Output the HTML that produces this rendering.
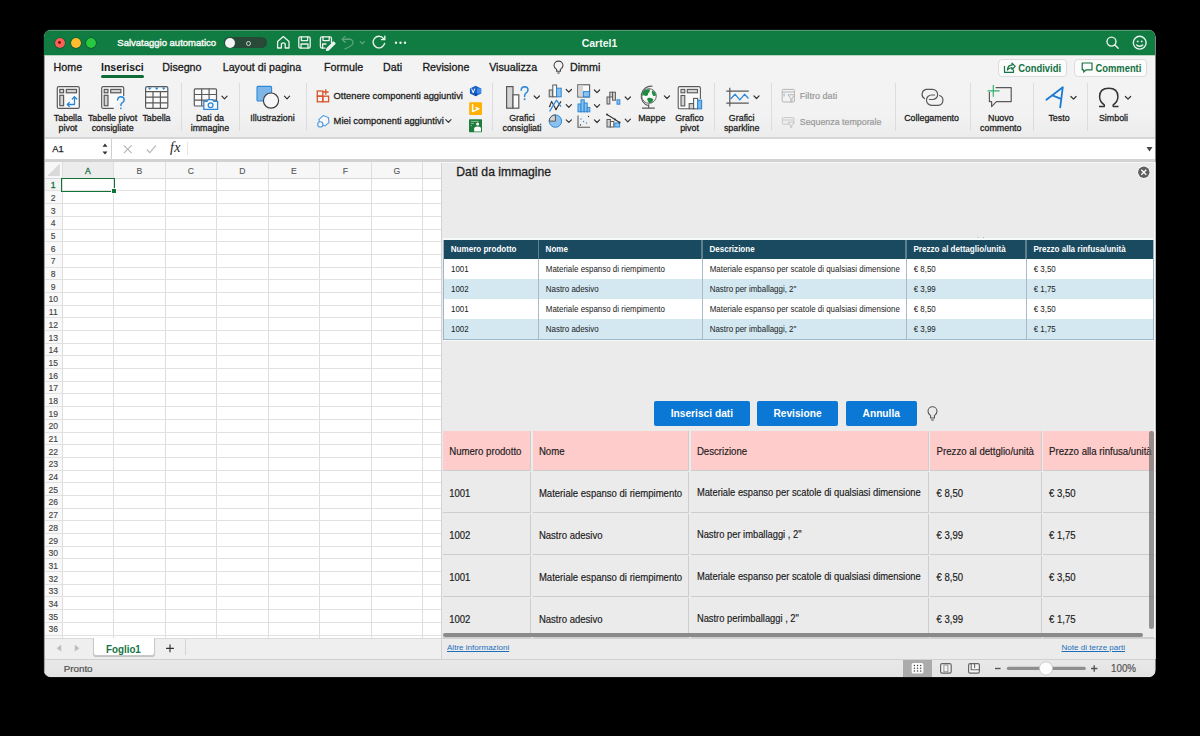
<!DOCTYPE html><html><head><meta charset="utf-8"><style>
html,body{margin:0;padding:0;background:#000;width:1200px;height:736px;overflow:hidden;font-family:"Liberation Sans", sans-serif;}
#win{position:absolute;left:0;top:0;width:1200px;height:736px;clip-path:inset(30px 44.5px 58.9px 44px round 7px);background:#f3f3f3;}
svg{position:absolute;overflow:visible}
</style></head><body>
<div style="position:absolute;left:43px;top:29px;width:1113px;height:649px;border-radius:8px;background:#121212;"></div>
<div id="win">

<div style="position:absolute;left:44px;top:30px;width:1111px;height:25px;background:#107c41"></div>
<div style="position:absolute;left:44px;top:30px;width:1111px;height:1px;background:#4f9a70"></div>
<div style="position:absolute;left:44px;top:54.5px;width:1111px;height:1px;background:#b9d4c4"></div>
<div style="position:absolute;left:54.5px;top:37.5px;width:10px;height:10px;border-radius:50%;background:#fe5f57;box-shadow:0 0 0 0.6px rgba(0,40,20,0.55)"></div>
<div style="position:absolute;left:70.5px;top:37.5px;width:10px;height:10px;border-radius:50%;background:#febc2e;box-shadow:0 0 0 0.6px rgba(0,40,20,0.55)"></div>
<div style="position:absolute;left:86.3px;top:37.5px;width:10px;height:10px;border-radius:50%;background:#28c840;box-shadow:0 0 0 0.6px rgba(0,40,20,0.55)"></div>
<div style="position:absolute;left:58.1px;top:41.1px;width:2.8px;height:2.8px;border-radius:50%;background:#7a1510"></div>
<div style="position:absolute;left:117.3px;top:38.16px;font-size:9.5px;color:#f0f6f2;font-weight:normal;white-space:nowrap;line-height:1;-webkit-text-stroke:0.45px #f0f6f2">Salvataggio automatico</div>
<div style="position:absolute;left:224px;top:37.2px;width:43px;height:11px;border-radius:6px;background:#284838"></div>
<div style="position:absolute;left:224.5px;top:37.5px;width:10px;height:10px;border-radius:50%;background:#f4f4f4"></div>
<div style="position:absolute;left:246px;top:40.5px;width:5px;height:5px;border-radius:50%;box-sizing:border-box;border:1px solid #cfd8d2"></div>
<div style="position:absolute;left:449.5px;width:300px;text-align:center;top:37.71px;font-size:10.5px;color:#f4f8f5;font-weight:bold;white-space:nowrap;line-height:1;">Cartel1</div>
<svg style="left:0;top:0" width="1200" height="60">
<g fill="none" stroke="#eaf3ee" stroke-width="1.3" stroke-linejoin="round" stroke-linecap="round">
<path d="M277.6 48 V41.5 L283.3 36.6 L289 41.5 V48 H285.2 V43.8 Q283.3 42 281.4 43.8 V48 Z"/>
<rect x="298.8" y="36.8" width="11.4" height="11.4" rx="1.6"/>
<path d="M301.4 37 V40.6 H307.6 V37"/><path d="M301 48 V44 H308 V48"/>
<path d="M331.5 43 V38.4 Q331.5 36.8 329.9 36.8 H322 Q320.4 36.8 320.4 38.4 V46.6 Q320.4 48.2 322 48.2 H325"/>
<path d="M323 37 V40.6 H329.2 V37"/><path d="M322.6 48 V44 H326"/>
<path d="M327 48.5 L333.5 42 L335 43.5 L328.5 50 L326.6 50.3 Z" fill="#eaf3ee"/>
</g>
<g fill="none" stroke="#5fa37f" stroke-width="1.3" stroke-linecap="round" stroke-linejoin="round">
<path d="M342.4 39.4 L348 39 Q353.2 39.2 353 43 Q352.6 46 345 48.8"/><path d="M345 36.4 L342.2 39.4 L345.2 42.2"/>
<path d="M360.3 41.8 L362.3 43.8 L364.3 41.8"/>
</g>
<g fill="none" stroke="#eaf3ee" stroke-width="1.4" stroke-linecap="round">
<path d="M383.6 38.6 A5.8 5.8 0 1 0 384.6 43.4"/><path d="M384.8 36.2 V39.6 H381.4"/>
</g>
<g fill="#eaf3ee"><circle cx="396" cy="42.8" r="1.2"/><circle cx="400.5" cy="42.8" r="1.2"/><circle cx="405" cy="42.8" r="1.2"/></g>
<g fill="none" stroke="#eaf3ee" stroke-width="1.4" stroke-linecap="round">
<circle cx="1111.5" cy="41.6" r="4.5"/><path d="M1114.7 44.8 L1118.2 48.3"/>
<circle cx="1139.7" cy="42.7" r="6.4"/><path d="M1136.7 45 Q1139.7 47.6 1142.7 45"/>
</g>
<g fill="#eaf3ee"><circle cx="1137.7" cy="41.4" r="0.95"/><circle cx="1141.7" cy="41.4" r="0.95"/></g>
</svg>
<div style="position:absolute;left:53.6px;top:61.94px;font-size:10.7px;color:#1a1a1a;font-weight:normal;white-space:nowrap;line-height:1;-webkit-text-stroke:0.3px #1a1a1a">Home</div>
<div style="position:absolute;left:101px;top:62.07px;font-size:10.55px;color:#1a1a1a;font-weight:bold;white-space:nowrap;line-height:1;">Inserisci</div>
<div style="position:absolute;left:162.3px;top:61.94px;font-size:10.7px;color:#1a1a1a;font-weight:normal;white-space:nowrap;line-height:1;-webkit-text-stroke:0.3px #1a1a1a">Disegno</div>
<div style="position:absolute;left:222.7px;top:61.94px;font-size:10.7px;color:#1a1a1a;font-weight:normal;white-space:nowrap;line-height:1;-webkit-text-stroke:0.3px #1a1a1a">Layout di pagina</div>
<div style="position:absolute;left:324px;top:61.94px;font-size:10.7px;color:#1a1a1a;font-weight:normal;white-space:nowrap;line-height:1;-webkit-text-stroke:0.3px #1a1a1a">Formule</div>
<div style="position:absolute;left:383px;top:61.94px;font-size:10.7px;color:#1a1a1a;font-weight:normal;white-space:nowrap;line-height:1;-webkit-text-stroke:0.3px #1a1a1a">Dati</div>
<div style="position:absolute;left:422.4px;top:61.94px;font-size:10.7px;color:#1a1a1a;font-weight:normal;white-space:nowrap;line-height:1;-webkit-text-stroke:0.3px #1a1a1a">Revisione</div>
<div style="position:absolute;left:489.2px;top:61.94px;font-size:10.7px;color:#1a1a1a;font-weight:normal;white-space:nowrap;line-height:1;-webkit-text-stroke:0.3px #1a1a1a">Visualizza</div>
<div style="position:absolute;left:570px;top:61.94px;font-size:10.7px;color:#1a1a1a;font-weight:normal;white-space:nowrap;line-height:1;-webkit-text-stroke:0.3px #1a1a1a">Dimmi</div>
<div style="position:absolute;left:101px;top:75px;width:43px;height:2.6px;border-radius:2px;background:#0f6b36"></div>
<svg style="left:0;top:0" width="1200" height="80"><g fill="none" stroke="#444" stroke-width="1.1">
<path d="M556.6 71.2 V69.4 Q554 67.8 554 65.6 A4.5 4.5 0 0 1 563 65.6 Q563 67.8 560.4 69.4 V71.2 Z"/><path d="M557.2 73 H559.8"/></g></svg>
<div style="position:absolute;left:997.5px;top:58.8px;width:69px;height:18.4px;box-sizing:border-box;border:1px solid #dcdcdc;border-radius:4px;background:#fbfbfb"></div>
<div style="position:absolute;left:1074.3px;top:58.8px;width:73.2px;height:18.4px;box-sizing:border-box;border:1px solid #dcdcdc;border-radius:4px;background:#fbfbfb"></div>
<div style="position:absolute;left:1018.3px;top:64.24px;font-size:9.4px;color:#127240;font-weight:bold;white-space:nowrap;line-height:1;transform:scaleY(1.1);transform-origin:0 84.65%">Condividi</div>
<div style="position:absolute;left:1095.5px;top:64.24px;font-size:9.4px;color:#127240;font-weight:bold;white-space:nowrap;line-height:1;transform:scaleY(1.1);transform-origin:0 84.65%">Commenti</div>
<svg style="left:0;top:0" width="1200" height="80"><g fill="none" stroke="#167443" stroke-width="1.2" stroke-linejoin="round">
<path d="M1004.5 66 V72.3 H1013.5 V69.5"/><path d="M1007.4 70 Q1007.8 65.2 1012 65.2 V63.2 L1015.2 66.4 L1012 69.6 V67.6 Q1009.2 67.6 1007.4 70 Z"/>
<path d="M1082.2 63 H1092 V69.8 H1086 L1083.7 72.2 V69.8 H1082.2 Z"/>
</g></svg>
<div style="position:absolute;left:44px;top:80px;width:1111px;height:57px;background:linear-gradient(#f3f3f3 0%,#f2f2f2 60%,#ececec 100%)"></div>
<div style="position:absolute;left:44px;top:137px;width:1111px;height:1.5px;background:#d7d7d7"></div>
<div style="position:absolute;left:181px;top:82.7px;width:1px;height:48.5px;background:#dcdcdc"></div>
<div style="position:absolute;left:239px;top:82.7px;width:1px;height:48.5px;background:#dcdcdc"></div>
<div style="position:absolute;left:305.8px;top:82.7px;width:1px;height:48.5px;background:#dcdcdc"></div>
<div style="position:absolute;left:492px;top:82.7px;width:1px;height:48.5px;background:#dcdcdc"></div>
<div style="position:absolute;left:714.2px;top:82.7px;width:1px;height:48.5px;background:#dcdcdc"></div>
<div style="position:absolute;left:770.7px;top:82.7px;width:1px;height:48.5px;background:#dcdcdc"></div>
<div style="position:absolute;left:894.5px;top:82.7px;width:1px;height:48.5px;background:#dcdcdc"></div>
<div style="position:absolute;left:970px;top:82.7px;width:1px;height:48.5px;background:#dcdcdc"></div>
<div style="position:absolute;left:1033px;top:82.7px;width:1px;height:48.5px;background:#dcdcdc"></div>
<div style="position:absolute;left:1087px;top:82.7px;width:1px;height:48.5px;background:#dcdcdc"></div>
<div style="position:absolute;left:44px;top:138.5px;width:1111px;height:20.8px;background:#ffffff"></div>
<div style="position:absolute;left:111px;top:138.5px;width:1.2px;height:20.8px;background:#cfcfcf"></div>
<div style="position:absolute;left:187px;top:142px;width:1px;height:13px;background:#e6e6e6"></div>
<div style="position:absolute;left:44px;top:159.3px;width:1111px;height:2.5px;background:#d2d2d2"></div>
<div style="position:absolute;left:52.3px;top:145.13px;font-size:9.3px;color:#222;font-weight:normal;white-space:nowrap;line-height:1;-webkit-text-stroke:0.25px #222">A1</div>
<div style="position:absolute;left:-82.1px;width:300px;text-align:center;top:114.37px;font-size:8.9px;color:#1e1e1e;font-weight:normal;white-space:nowrap;line-height:1;-webkit-text-stroke:0.28px #1e1e1e">Tabella</div>
<div style="position:absolute;left:-82.1px;width:300px;text-align:center;top:123.57px;font-size:8.9px;color:#1e1e1e;font-weight:normal;white-space:nowrap;line-height:1;-webkit-text-stroke:0.28px #1e1e1e">pivot</div>
<div style="position:absolute;left:-37.400000000000006px;width:300px;text-align:center;top:114.37px;font-size:8.9px;color:#1e1e1e;font-weight:normal;white-space:nowrap;line-height:1;-webkit-text-stroke:0.28px #1e1e1e">Tabelle pivot</div>
<div style="position:absolute;left:-37.400000000000006px;width:300px;text-align:center;top:123.57px;font-size:8.9px;color:#1e1e1e;font-weight:normal;white-space:nowrap;line-height:1;-webkit-text-stroke:0.28px #1e1e1e">consigliate</div>
<div style="position:absolute;left:6.5px;width:300px;text-align:center;top:114.37px;font-size:8.9px;color:#1e1e1e;font-weight:normal;white-space:nowrap;line-height:1;-webkit-text-stroke:0.28px #1e1e1e">Tabella</div>
<div style="position:absolute;left:60px;width:300px;text-align:center;top:114.37px;font-size:8.9px;color:#1e1e1e;font-weight:normal;white-space:nowrap;line-height:1;-webkit-text-stroke:0.28px #1e1e1e">Dati da</div>
<div style="position:absolute;left:60px;width:300px;text-align:center;top:123.57px;font-size:8.9px;color:#1e1e1e;font-weight:normal;white-space:nowrap;line-height:1;-webkit-text-stroke:0.28px #1e1e1e">immagine</div>
<div style="position:absolute;left:122.5px;width:300px;text-align:center;top:114.37px;font-size:8.9px;color:#1e1e1e;font-weight:normal;white-space:nowrap;line-height:1;-webkit-text-stroke:0.28px #1e1e1e">Illustrazioni</div>
<div style="position:absolute;left:372px;width:300px;text-align:center;top:114.37px;font-size:8.9px;color:#1e1e1e;font-weight:normal;white-space:nowrap;line-height:1;-webkit-text-stroke:0.28px #1e1e1e">Grafici</div>
<div style="position:absolute;left:372px;width:300px;text-align:center;top:123.57px;font-size:8.9px;color:#1e1e1e;font-weight:normal;white-space:nowrap;line-height:1;-webkit-text-stroke:0.28px #1e1e1e">consigliati</div>
<div style="position:absolute;left:501.79999999999995px;width:300px;text-align:center;top:114.37px;font-size:8.9px;color:#1e1e1e;font-weight:normal;white-space:nowrap;line-height:1;-webkit-text-stroke:0.28px #1e1e1e">Mappe</div>
<div style="position:absolute;left:539.5px;width:300px;text-align:center;top:114.37px;font-size:8.9px;color:#1e1e1e;font-weight:normal;white-space:nowrap;line-height:1;-webkit-text-stroke:0.28px #1e1e1e">Grafico</div>
<div style="position:absolute;left:539.5px;width:300px;text-align:center;top:123.57px;font-size:8.9px;color:#1e1e1e;font-weight:normal;white-space:nowrap;line-height:1;-webkit-text-stroke:0.28px #1e1e1e">pivot</div>
<div style="position:absolute;left:591.7px;width:300px;text-align:center;top:114.37px;font-size:8.9px;color:#1e1e1e;font-weight:normal;white-space:nowrap;line-height:1;-webkit-text-stroke:0.28px #1e1e1e">Grafici</div>
<div style="position:absolute;left:591.7px;width:300px;text-align:center;top:123.57px;font-size:8.9px;color:#1e1e1e;font-weight:normal;white-space:nowrap;line-height:1;-webkit-text-stroke:0.28px #1e1e1e">sparkline</div>
<div style="position:absolute;left:781.6px;width:300px;text-align:center;top:114.37px;font-size:8.9px;color:#1e1e1e;font-weight:normal;white-space:nowrap;line-height:1;-webkit-text-stroke:0.28px #1e1e1e">Collegamento</div>
<div style="position:absolute;left:850.8px;width:300px;text-align:center;top:114.37px;font-size:8.9px;color:#1e1e1e;font-weight:normal;white-space:nowrap;line-height:1;-webkit-text-stroke:0.28px #1e1e1e">Nuovo</div>
<div style="position:absolute;left:850.8px;width:300px;text-align:center;top:123.57px;font-size:8.9px;color:#1e1e1e;font-weight:normal;white-space:nowrap;line-height:1;-webkit-text-stroke:0.28px #1e1e1e">commento</div>
<div style="position:absolute;left:909px;width:300px;text-align:center;top:114.37px;font-size:8.9px;color:#1e1e1e;font-weight:normal;white-space:nowrap;line-height:1;-webkit-text-stroke:0.28px #1e1e1e">Testo</div>
<div style="position:absolute;left:963.5px;width:300px;text-align:center;top:114.37px;font-size:8.9px;color:#1e1e1e;font-weight:normal;white-space:nowrap;line-height:1;-webkit-text-stroke:0.28px #1e1e1e">Simboli</div>
<div style="position:absolute;left:333.6px;top:91.69px;font-size:9.35px;color:#1e1e1e;font-weight:normal;white-space:nowrap;line-height:1;-webkit-text-stroke:0.28px #1e1e1e">Ottenere componenti aggiuntivi</div>
<div style="position:absolute;left:333.6px;top:116.69px;font-size:9.35px;color:#1e1e1e;font-weight:normal;white-space:nowrap;line-height:1;-webkit-text-stroke:0.28px #1e1e1e">Miei componenti aggiuntivi</div>
<div style="position:absolute;left:799.8px;top:91.7px;font-size:9.1px;color:#999;font-weight:normal;white-space:nowrap;line-height:1;-webkit-text-stroke:0.2px #999">Filtro dati</div>
<div style="position:absolute;left:799.8px;top:117.51px;font-size:8.85px;color:#999;font-weight:normal;white-space:nowrap;line-height:1;-webkit-text-stroke:0.2px #999">Sequenza temporale</div>
<svg style="left:0;top:0" width="1200" height="140">
<defs><path id="chev" d="M-2.6 -1.3 L0 1.3 L2.6 -1.3" fill="none" stroke="#333" stroke-width="1.2" stroke-linecap="round" stroke-linejoin="round"/></defs>
<!-- tabella pivot -->
<g stroke="#595959" stroke-width="1.2" fill="none">
<rect x="57.3" y="86.6" width="22" height="21.8" rx="1.5" fill="#fafafa"/>
<rect x="59.8" y="89.4" width="3.8" height="3.4" fill="#d4d4d4"/><rect x="66.3" y="89.4" width="10.2" height="3.4" fill="#d4d4d4"/>
<rect x="59.8" y="95.3" width="3.8" height="10.4" fill="#d4d4d4"/>
</g>
<g stroke="#2b88d8" stroke-width="1.3" fill="none" stroke-linecap="round" stroke-linejoin="round">
<path d="M67.5 104.5 H74.5 V97"/><path d="M72.3 99 L74.5 96.7 L76.7 99"/><path d="M69.3 102.5 L67.3 104.5 L69.3 106.5"/>
</g>
<!-- tabelle pivot consigliate -->
<g stroke="#595959" stroke-width="1.2" fill="none">
<path d="M113.8 108.4 H103.2 Q101.7 108.4 101.7 106.9 V88.1 Q101.7 86.6 103.2 86.6 H122.2 Q123.7 86.6 123.7 88.1 V96" fill="#fafafa"/>
<rect x="104.2" y="89.4" width="3.8" height="3.4" fill="#d4d4d4"/><rect x="110.7" y="89.4" width="10.2" height="3.4" fill="#d4d4d4"/>
<rect x="104.2" y="95.3" width="3.8" height="10.4" fill="#d4d4d4"/>
</g>
<g stroke="#2b88d8" stroke-width="1.5" fill="none" stroke-linecap="round">
<path d="M117.6 100 Q117.8 96.7 121 96.7 Q124.2 96.8 124.2 99.8 Q124.2 102 121.8 103.2 Q120.9 103.8 120.9 105.6"/>
</g>
<circle cx="120.9" cy="108.3" r="0.9" fill="#2b88d8"/>
<!-- tabella -->
<g stroke="#595959" stroke-width="1.2" fill="#fafafa">
<rect x="145.6" y="86.6" width="22.2" height="21.8" rx="1.5"/>
<path d="M145.6 91.6 H167.8 M145.6 97.2 H167.8 M145.6 102.8 H167.8 M153 91.6 V108.4 M160.4 91.6 V108.4" fill="none"/>
</g>
<g fill="#2b88d8"><path d="M147.7 87.6 H151.7 L149.7 90 Z"/><path d="M154.7 87.6 H158.7 L156.7 90 Z"/><path d="M161.7 87.6 H165.7 L163.7 90 Z"/></g>
<!-- dati da immagine -->
<g stroke="#595959" stroke-width="1.2" fill="#fafafa">
<rect x="194.3" y="88.8" width="22.2" height="17.2" rx="1"/>
<path d="M194.3 94.5 H216.5 M194.3 100.2 H216.5 M201.7 88.8 V106 M209.1 88.8 V106" fill="none"/>
</g>
<g stroke="#2b88d8" stroke-width="1.3" fill="#fafafa" stroke-linejoin="round">
<path d="M203.8 101.3 H207 L208.3 99.6 H212.5 L213.8 101.3 H217.6 V109.4 H203.8 Z"/>
<circle cx="210.6" cy="105.2" r="2.4"/>
</g>
<use href="#chev" x="224.5" y="97.5"/>
<!-- illustrazioni -->
<rect x="257" y="86.4" width="14.6" height="14.6" rx="1" fill="#7db6e8" stroke="#2b88d8" stroke-width="1.1"/>
<circle cx="271" cy="100.6" r="7.6" fill="#f7f7f7" stroke="#404040" stroke-width="1.2"/>
<use href="#chev" x="287" y="97.5"/>
<!-- ottenere componenti -->
<g stroke="#d9542c" stroke-width="1.3" fill="none">
<rect x="317.3" y="91" width="5.5" height="5.2"/><rect x="317.3" y="96.2" width="5.5" height="5.6"/><rect x="322.8" y="96.2" width="5.8" height="5.6"/>
<path d="M325.8 89.2 V94.8 M323 92 H328.6"/>
</g>
<!-- miei componenti -->
<g stroke="#4a9be0" stroke-width="1.1" fill="#f7f7f7">
<path d="M323.2 115.6 L328.4 117.6 L329 122.6 L325 126 L319.8 124.4 L319 119.4 Z"/>
<circle cx="320.3" cy="124.4" r="2.6"/>
</g>
<use href="#chev" x="448.4" y="121"/>
<!-- side icons -->
<path d="M475.6 85.8 L481.2 88.4 V93.4 L475.6 96.2 L469.9 93.4 V88.4 Z" fill="#1b5fc4"/>
<rect x="477" y="88.4" width="4.2" height="5" fill="#3f8ef0"/>
<path d="M471.6 88.6 L473.2 92.8 L474.8 88.6" stroke="#fff" stroke-width="1" fill="none"/>
<path d="M474.5 92.8 L477.3 94.4 L475.6 96.2 Z" fill="#0c3f8f"/>
<rect x="469.2" y="102.2" width="12.8" height="12.8" rx="0.8" fill="#ffb000"/>
<path d="M472.6 104.2 V111.6 L478.8 108.8 L475.4 107.4" stroke="#fff" stroke-width="1.5" fill="none" stroke-linejoin="round"/>
<rect x="469" y="119.2" width="13" height="13" rx="0.8" fill="#1f7d3c"/>
<path d="M470.8 121.4 H478.6 M470.8 123.4 H474 M470.8 125.6 H472" stroke="#cfe6d5" stroke-width="0.6"/>
<circle cx="477.6" cy="124" r="1.5" fill="#fff"/>
<path d="M474.2 131.6 V128.6 Q474.2 126.4 477.6 126.4 Q481 126.4 481 128.6 V131.6 Z" fill="#fff"/>
<!-- grafici consigliati -->
<g stroke="#595959" stroke-width="1.2" fill="#d4d4d4">
<rect x="506.6" y="86.6" width="6.4" height="21.6"/><rect x="513" y="94.8" width="5.8" height="13.4" fill="#fafafa"/>
</g>
<path d="M521.2 90.2 Q521.4 86.8 524.6 86.8 Q528 86.9 528 90 Q528 92.2 525.5 93.6 Q524.6 94.2 524.6 96.5" stroke="#2b88d8" stroke-width="1.5" fill="none" stroke-linecap="round"/>
<circle cx="524.6" cy="99.3" r="0.95" fill="#2b88d8"/>
<use href="#chev" x="536.8" y="97.3"/>
<!-- col chart -->
<g stroke="#595959" stroke-width="1" >
<rect x="549.2" y="90" width="3.6" height="6.8" fill="#d4d4d4"/><rect x="552.8" y="85" width="3.8" height="11.8" fill="#fafafa"/>
</g>
<rect x="556.6" y="88.2" width="4.6" height="8.6" fill="#8cc1ee" stroke="#2b88d8" stroke-width="1"/>
<use href="#chev" x="568.8" y="90.8"/>
<!-- line chart -->
<path d="M549.6 106.5 L551.6 101.4 L556 109.4 L561 101.4" stroke="#333" stroke-width="1.1" fill="none" stroke-linejoin="round"/>
<path d="M549.6 111.4 L556.4 100.2 L561 106.6" stroke="#2b88d8" stroke-width="1.2" fill="none" stroke-linejoin="round"/>
<g fill="#333"><circle cx="549.6" cy="106.5" r="0.8"/><circle cx="556" cy="109.4" r="0.8"/></g>
<use href="#chev" x="568.8" y="106"/>
<!-- pie -->
<circle cx="555.4" cy="121.1" r="6.2" fill="#8cc1ee" stroke="#2b88d8" stroke-width="1"/>
<path d="M555.4 121.1 V114.9 A6.2 6.2 0 0 0 549.2 121.1 Z" fill="#d4d4d4" stroke="#595959" stroke-width="1"/>
<use href="#chev" x="568.8" y="121.1"/>
<!-- treemap -->
<rect x="577.8" y="84.8" width="11.8" height="12.2" fill="#fafafa" stroke="#595959" stroke-width="1.1"/>
<rect x="578.3" y="85.3" width="4.8" height="11.2" fill="#d4d4d4"/>
<rect x="583.4" y="91.6" width="6" height="5.2" fill="#8cc1ee" stroke="#2b88d8" stroke-width="1"/>
<use href="#chev" x="597" y="91.3"/>
<!-- histogram -->
<g fill="#8cc1ee" stroke="#2b88d8" stroke-width="1"><rect x="578" y="104" width="3" height="7.8"/><rect x="581" y="99.8" width="3.2" height="12"/><rect x="584.2" y="103" width="3" height="8.8"/><rect x="587.2" y="107.5" width="2.6" height="4.3"/></g>
<use href="#chev" x="597" y="106"/>
<!-- scatter -->
<path d="M578 115.5 V127.3 H590" stroke="#595959" stroke-width="1.1" fill="none"/>
<g fill="#2b88d8"><circle cx="581" cy="119" r="0.7"/><circle cx="583.5" cy="121.5" r="0.7"/><circle cx="586.5" cy="123" r="0.7"/></g>
<g fill="#333"><circle cx="588.5" cy="116.5" r="0.7"/><circle cx="580.5" cy="125" r="0.7"/></g>
<use href="#chev" x="597" y="121.2"/>
<!-- waterfall -->
<g stroke="#595959" stroke-width="1" fill="#d4d4d4"><rect x="607" y="97" width="2.8" height="7"/><rect x="609.8" y="92.2" width="2.8" height="4.8"/><rect x="612.6" y="92.2" width="2.8" height="8"/></g>
<rect x="617" y="99.8" width="2.8" height="4.4" fill="#8cc1ee" stroke="#2b88d8" stroke-width="1"/>
<use href="#chev" x="627.8" y="98.3"/>
<!-- combo -->
<g stroke="#595959" stroke-width="1" fill="#d4d4d4"><rect x="607" y="119.5" width="3.4" height="7.5"/><rect x="610.4" y="121.5" width="3.4" height="5.5" fill="#fafafa"/></g>
<rect x="614.8" y="123" width="4.8" height="4" fill="#8cc1ee" stroke="#2b88d8" stroke-width="1"/>
<path d="M607 114.5 L611 117 L615 119.5 L619.5 122.5" stroke="#333" stroke-width="1.1" fill="none"/>
<g fill="#333"><circle cx="607" cy="114.5" r="1"/><circle cx="615" cy="119.5" r="1"/><circle cx="619.5" cy="122.5" r="1"/></g>
<use href="#chev" x="627.8" y="120.5"/>
<!-- globe -->
<path d="M652.5 86.2 A10 10 0 0 0 648.7 105.8" stroke="#595959" stroke-width="1.1" fill="none"/>
<circle cx="649" cy="96" r="7.3" fill="#f8f8f8" stroke="#595959" stroke-width="0.9"/>
<path d="M643.6 90.8 Q646 88.8 649.6 89.2 Q650.6 91 649 92.6 Q647.6 93.2 648 95 Q646 96.6 644.6 95.6 Q643.2 94.8 642.2 96 Q641.9 92.8 643.6 90.8 Z" fill="#1e8b43"/>
<path d="M652 90.2 Q655.4 91.6 656.2 95.2 Q654.6 96.6 653 95.4 Q651.2 93.2 652 90.2 Z" fill="#1e8b43"/>
<path d="M647.6 98 Q650.8 97 653.4 99.2 Q653.2 101.8 650.4 103.2 Q648.4 103.2 648 101.2 Q646.6 99.8 647.6 98 Z" fill="#1e8b43"/>
<path d="M648.7 104.2 V108 M642 108.2 H654.8" stroke="#595959" stroke-width="1.2"/>
<use href="#chev" x="667" y="97.2"/>
<!-- grafico pivot -->
<g stroke="#595959" stroke-width="1.1" fill="none">
<path d="M689 108.8 H679.6 Q678.2 108.8 678.2 107.4 V88 Q678.2 86.6 679.6 86.6 H699 Q700.4 86.6 700.4 88 V99" fill="#fafafa"/>
<rect x="681" y="89.4" width="3.8" height="3.4" fill="#d4d4d4"/><rect x="687.3" y="89.4" width="10.2" height="3.4" fill="#d4d4d4"/>
<rect x="681" y="95.5" width="3.8" height="10.4" fill="#d4d4d4"/>
<rect x="689.2" y="103.6" width="4.4" height="5.2" fill="#d4d4d4"/><rect x="693.6" y="98.4" width="4" height="10.4" fill="#fafafa"/>
</g>
<rect x="697.6" y="100.2" width="4" height="8.6" fill="#7db6e8" stroke="#2b88d8" stroke-width="1.1"/>
<!-- sparkline -->
<path d="M729.8 87.8 V106.6 M726.3 91.1 H748.8 M726.3 103.2 H748.8" stroke="#595959" stroke-width="1.2" fill="none"/>
<path d="M730.5 99 L735.2 94.3 L739.8 99.8 L744.5 94.3 L748.5 98.5" stroke="#2b88d8" stroke-width="1.3" fill="none" stroke-linejoin="round"/>
<use href="#chev" x="756.5" y="97.2"/>
<!-- filtro dati -->
<g stroke="#b5b5b5" stroke-width="1" fill="none">
<rect x="782.2" y="89.4" width="12.2" height="12.6" rx="1"/><path d="M782.2 92 H794.4"/>
<path d="M788 94.8 H794.8 L792 98.2 V101.5 L790.8 102.2 V98.2 Z" fill="#f3f3f3"/>
</g>
<rect x="783.5" y="93.5" width="1.2" height="3" fill="#8cc1ee"/>
<g stroke="#c8c8c8" stroke-width="1" fill="none">
<rect x="782.4" y="117.6" width="11.4" height="6.6" rx="0.8"/><path d="M782.4 120 H793.8"/>
<path d="M787.8 122.2 H794.4 L791.8 125 V127.4 L790.6 127.8 V125 Z" fill="#f3f3f3"/>
</g>
<!-- collegamento -->
<g stroke="#595959" stroke-width="1.2" fill="none">
<path d="M924.4 98.6 A5.1 5.1 0 0 1 925.9 89.4 H932.6 A5.05 5.05 0 0 1 932.6 99.5 H929.4" stroke-linecap="round"/>
<path d="M939.6 95.5 A5.1 5.1 0 0 1 938.7 105.3 H931.6 A5.15 5.15 0 0 1 931.6 95 H934.6" stroke-linecap="round"/>
</g>
<!-- nuovo commento -->
<path d="M989.4 92 V101.6 H991.6 V106.6 L996.4 101.6 H1011.2 V87.6 H995.6" stroke="#595959" stroke-width="1.2" fill="none" stroke-linejoin="round"/>
<path d="M993.3 85 V96.8 M987.6 90.9 H999.6" stroke="#2eb068" stroke-width="1.15"/>
<!-- testo -->
<path d="M1046.4 99.8 L1062.8 87.2 L1060.2 107.4 M1052.4 95.4 L1061 98.8" stroke="#1a7ad4" stroke-width="1.8" fill="none" stroke-linecap="round" stroke-linejoin="round"/>
<use href="#chev" x="1073.5" y="97.8"/>
<!-- simboli -->
<path d="M1099 106.6 H1104.3 V104.8 Q1099.6 102 1099.6 96.6 Q1099.6 88.2 1108.75 88.2 Q1117.9 88.2 1117.9 96.6 Q1117.9 102 1113.2 104.8 V106.6 H1118.5" fill="none" stroke="#333" stroke-width="1.5" stroke-linejoin="round"/>
<use href="#chev" x="1128" y="97.8"/>
</svg>
<svg style="left:0;top:0" width="1200" height="170">
<path d="M102.5 146.8 L105 143.6 L107.5 146.8 Z M102.5 151.4 L105 154.6 L107.5 151.4 Z" fill="#333"/>
<path d="M123.8 145.3 L131.6 153.1 M131.6 145.3 L123.8 153.1" stroke="#b4b4b4" stroke-width="1.1"/>
<path d="M146.8 149.5 L149.8 152.6 L155.8 145.6" stroke="#b4b4b4" stroke-width="1.1" fill="none"/>
<path d="M1146.5 147 H1152.5 L1149.5 151.5 Z" fill="#444"/>
</svg>
<div style="position:absolute;left:170px;top:140.6px;font-family:Liberation Serif;font-style:italic;font-size:14px;color:#222;line-height:1;letter-spacing:0.3px">fx</div>
<div style="position:absolute;left:44px;top:161.8px;width:397px;height:16.5px;background:#f7f7f7"></div>
<div style="position:absolute;left:62.2px;top:161.8px;width:51.47px;height:16.5px;background:#ececec"></div>
<div style="position:absolute;left:44px;top:178.3px;width:18.2px;height:459.7px;background:#f9f9f9"></div>
<div style="position:absolute;left:44px;top:178.3px;width:18.2px;height:12.686px;background:#f4f4f4"></div>
<div style="position:absolute;left:62.2px;top:178.3px;width:379px;height:459.7px;background:#ffffff"></div>
<svg style="left:0;top:0" width="1200" height="200"><path d="M59.8 163.5 V176 H47.2 Z" fill="#d9d9d9"/></svg>
<div style="position:absolute;left:61.7px;top:161.8px;width:1px;height:476.2px;background:#dedede"></div>
<div style="position:absolute;left:113.17px;top:161.8px;width:1px;height:476.2px;background:#dedede"></div>
<div style="position:absolute;left:164.64px;top:161.8px;width:1px;height:476.2px;background:#dedede"></div>
<div style="position:absolute;left:216.11px;top:161.8px;width:1px;height:476.2px;background:#dedede"></div>
<div style="position:absolute;left:267.58px;top:161.8px;width:1px;height:476.2px;background:#dedede"></div>
<div style="position:absolute;left:319.05px;top:161.8px;width:1px;height:476.2px;background:#dedede"></div>
<div style="position:absolute;left:370.52px;top:161.8px;width:1px;height:476.2px;background:#dedede"></div>
<div style="position:absolute;left:421.99px;top:161.8px;width:1px;height:476.2px;background:#dedede"></div>
<div style="position:absolute;left:44px;top:177.70000000000002px;width:397px;height:1px;background:#d8d8d8"></div>
<div style="position:absolute;left:44px;top:190.49px;width:397px;height:1px;background:#e1e1e1"></div>
<div style="position:absolute;left:44px;top:203.17px;width:397px;height:1px;background:#e1e1e1"></div>
<div style="position:absolute;left:44px;top:215.86px;width:397px;height:1px;background:#e1e1e1"></div>
<div style="position:absolute;left:44px;top:228.54px;width:397px;height:1px;background:#e1e1e1"></div>
<div style="position:absolute;left:44px;top:241.23px;width:397px;height:1px;background:#e1e1e1"></div>
<div style="position:absolute;left:44px;top:253.92px;width:397px;height:1px;background:#e1e1e1"></div>
<div style="position:absolute;left:44px;top:266.6px;width:397px;height:1px;background:#e1e1e1"></div>
<div style="position:absolute;left:44px;top:279.29px;width:397px;height:1px;background:#e1e1e1"></div>
<div style="position:absolute;left:44px;top:291.97px;width:397px;height:1px;background:#e1e1e1"></div>
<div style="position:absolute;left:44px;top:304.66px;width:397px;height:1px;background:#e1e1e1"></div>
<div style="position:absolute;left:44px;top:317.35px;width:397px;height:1px;background:#e1e1e1"></div>
<div style="position:absolute;left:44px;top:330.03px;width:397px;height:1px;background:#e1e1e1"></div>
<div style="position:absolute;left:44px;top:342.72px;width:397px;height:1px;background:#e1e1e1"></div>
<div style="position:absolute;left:44px;top:355.4px;width:397px;height:1px;background:#e1e1e1"></div>
<div style="position:absolute;left:44px;top:368.09px;width:397px;height:1px;background:#e1e1e1"></div>
<div style="position:absolute;left:44px;top:380.78px;width:397px;height:1px;background:#e1e1e1"></div>
<div style="position:absolute;left:44px;top:393.46px;width:397px;height:1px;background:#e1e1e1"></div>
<div style="position:absolute;left:44px;top:406.15px;width:397px;height:1px;background:#e1e1e1"></div>
<div style="position:absolute;left:44px;top:418.83px;width:397px;height:1px;background:#e1e1e1"></div>
<div style="position:absolute;left:44px;top:431.52px;width:397px;height:1px;background:#e1e1e1"></div>
<div style="position:absolute;left:44px;top:444.21px;width:397px;height:1px;background:#e1e1e1"></div>
<div style="position:absolute;left:44px;top:456.89px;width:397px;height:1px;background:#e1e1e1"></div>
<div style="position:absolute;left:44px;top:469.58px;width:397px;height:1px;background:#e1e1e1"></div>
<div style="position:absolute;left:44px;top:482.26px;width:397px;height:1px;background:#e1e1e1"></div>
<div style="position:absolute;left:44px;top:494.95px;width:397px;height:1px;background:#e1e1e1"></div>
<div style="position:absolute;left:44px;top:507.64px;width:397px;height:1px;background:#e1e1e1"></div>
<div style="position:absolute;left:44px;top:520.32px;width:397px;height:1px;background:#e1e1e1"></div>
<div style="position:absolute;left:44px;top:533.01px;width:397px;height:1px;background:#e1e1e1"></div>
<div style="position:absolute;left:44px;top:545.69px;width:397px;height:1px;background:#e1e1e1"></div>
<div style="position:absolute;left:44px;top:558.38px;width:397px;height:1px;background:#e1e1e1"></div>
<div style="position:absolute;left:44px;top:571.07px;width:397px;height:1px;background:#e1e1e1"></div>
<div style="position:absolute;left:44px;top:583.75px;width:397px;height:1px;background:#e1e1e1"></div>
<div style="position:absolute;left:44px;top:596.44px;width:397px;height:1px;background:#e1e1e1"></div>
<div style="position:absolute;left:44px;top:609.12px;width:397px;height:1px;background:#e1e1e1"></div>
<div style="position:absolute;left:44px;top:621.81px;width:397px;height:1px;background:#e1e1e1"></div>
<div style="position:absolute;left:44px;top:634.5px;width:397px;height:1px;background:#e1e1e1"></div>
<div style="position:absolute;left:-62.06px;width:300px;text-align:center;top:166.52px;font-size:8.6px;color:#17703e;font-weight:normal;white-space:nowrap;line-height:1;-webkit-text-stroke:0.3px #17703e">A</div>
<div style="position:absolute;left:-10.590000000000003px;width:300px;text-align:center;top:166.52px;font-size:8.6px;color:#555;font-weight:normal;white-space:nowrap;line-height:1;-webkit-text-stroke:0.1px #555">B</div>
<div style="position:absolute;left:40.879999999999995px;width:300px;text-align:center;top:166.52px;font-size:8.6px;color:#555;font-weight:normal;white-space:nowrap;line-height:1;-webkit-text-stroke:0.1px #555">C</div>
<div style="position:absolute;left:92.35px;width:300px;text-align:center;top:166.52px;font-size:8.6px;color:#555;font-weight:normal;white-space:nowrap;line-height:1;-webkit-text-stroke:0.1px #555">D</div>
<div style="position:absolute;left:143.81px;width:300px;text-align:center;top:166.52px;font-size:8.6px;color:#555;font-weight:normal;white-space:nowrap;line-height:1;-webkit-text-stroke:0.1px #555">E</div>
<div style="position:absolute;left:195.29000000000002px;width:300px;text-align:center;top:166.52px;font-size:8.6px;color:#555;font-weight:normal;white-space:nowrap;line-height:1;-webkit-text-stroke:0.1px #555">F</div>
<div style="position:absolute;left:246.75px;width:300px;text-align:center;top:166.52px;font-size:8.6px;color:#555;font-weight:normal;white-space:nowrap;line-height:1;-webkit-text-stroke:0.1px #555">G</div>
<div style="position:absolute;left:-96.8px;width:300px;text-align:center;top:181.32px;font-size:8.6px;color:#17703e;font-weight:normal;white-space:nowrap;line-height:1;transform:scaleY(1.08);transform-origin:0 84.65%;-webkit-text-stroke:0.3px #17703e">1</div>
<div style="position:absolute;left:-96.8px;width:300px;text-align:center;top:194.01px;font-size:8.6px;color:#444;font-weight:normal;white-space:nowrap;line-height:1;transform:scaleY(1.08);transform-origin:0 84.65%;-webkit-text-stroke:0.12px #444">2</div>
<div style="position:absolute;left:-96.8px;width:300px;text-align:center;top:206.69px;font-size:8.6px;color:#444;font-weight:normal;white-space:nowrap;line-height:1;transform:scaleY(1.08);transform-origin:0 84.65%;-webkit-text-stroke:0.12px #444">3</div>
<div style="position:absolute;left:-96.8px;width:300px;text-align:center;top:219.38px;font-size:8.6px;color:#444;font-weight:normal;white-space:nowrap;line-height:1;transform:scaleY(1.08);transform-origin:0 84.65%;-webkit-text-stroke:0.12px #444">4</div>
<div style="position:absolute;left:-96.8px;width:300px;text-align:center;top:232.06px;font-size:8.6px;color:#444;font-weight:normal;white-space:nowrap;line-height:1;transform:scaleY(1.08);transform-origin:0 84.65%;-webkit-text-stroke:0.12px #444">5</div>
<div style="position:absolute;left:-96.8px;width:300px;text-align:center;top:244.75px;font-size:8.6px;color:#444;font-weight:normal;white-space:nowrap;line-height:1;transform:scaleY(1.08);transform-origin:0 84.65%;-webkit-text-stroke:0.12px #444">6</div>
<div style="position:absolute;left:-96.8px;width:300px;text-align:center;top:257.44px;font-size:8.6px;color:#444;font-weight:normal;white-space:nowrap;line-height:1;transform:scaleY(1.08);transform-origin:0 84.65%;-webkit-text-stroke:0.12px #444">7</div>
<div style="position:absolute;left:-96.8px;width:300px;text-align:center;top:270.12px;font-size:8.6px;color:#444;font-weight:normal;white-space:nowrap;line-height:1;transform:scaleY(1.08);transform-origin:0 84.65%;-webkit-text-stroke:0.12px #444">8</div>
<div style="position:absolute;left:-96.8px;width:300px;text-align:center;top:282.81px;font-size:8.6px;color:#444;font-weight:normal;white-space:nowrap;line-height:1;transform:scaleY(1.08);transform-origin:0 84.65%;-webkit-text-stroke:0.12px #444">9</div>
<div style="position:absolute;left:-96.8px;width:300px;text-align:center;top:295.49px;font-size:8.6px;color:#444;font-weight:normal;white-space:nowrap;line-height:1;transform:scaleY(1.08);transform-origin:0 84.65%;-webkit-text-stroke:0.12px #444">10</div>
<div style="position:absolute;left:-96.8px;width:300px;text-align:center;top:308.18px;font-size:8.6px;color:#444;font-weight:normal;white-space:nowrap;line-height:1;transform:scaleY(1.08);transform-origin:0 84.65%;-webkit-text-stroke:0.12px #444">11</div>
<div style="position:absolute;left:-96.8px;width:300px;text-align:center;top:320.87px;font-size:8.6px;color:#444;font-weight:normal;white-space:nowrap;line-height:1;transform:scaleY(1.08);transform-origin:0 84.65%;-webkit-text-stroke:0.12px #444">12</div>
<div style="position:absolute;left:-96.8px;width:300px;text-align:center;top:333.55px;font-size:8.6px;color:#444;font-weight:normal;white-space:nowrap;line-height:1;transform:scaleY(1.08);transform-origin:0 84.65%;-webkit-text-stroke:0.12px #444">13</div>
<div style="position:absolute;left:-96.8px;width:300px;text-align:center;top:346.24px;font-size:8.6px;color:#444;font-weight:normal;white-space:nowrap;line-height:1;transform:scaleY(1.08);transform-origin:0 84.65%;-webkit-text-stroke:0.12px #444">14</div>
<div style="position:absolute;left:-96.8px;width:300px;text-align:center;top:358.92px;font-size:8.6px;color:#444;font-weight:normal;white-space:nowrap;line-height:1;transform:scaleY(1.08);transform-origin:0 84.65%;-webkit-text-stroke:0.12px #444">15</div>
<div style="position:absolute;left:-96.8px;width:300px;text-align:center;top:371.61px;font-size:8.6px;color:#444;font-weight:normal;white-space:nowrap;line-height:1;transform:scaleY(1.08);transform-origin:0 84.65%;-webkit-text-stroke:0.12px #444">16</div>
<div style="position:absolute;left:-96.8px;width:300px;text-align:center;top:384.3px;font-size:8.6px;color:#444;font-weight:normal;white-space:nowrap;line-height:1;transform:scaleY(1.08);transform-origin:0 84.65%;-webkit-text-stroke:0.12px #444">17</div>
<div style="position:absolute;left:-96.8px;width:300px;text-align:center;top:396.98px;font-size:8.6px;color:#444;font-weight:normal;white-space:nowrap;line-height:1;transform:scaleY(1.08);transform-origin:0 84.65%;-webkit-text-stroke:0.12px #444">18</div>
<div style="position:absolute;left:-96.8px;width:300px;text-align:center;top:409.67px;font-size:8.6px;color:#444;font-weight:normal;white-space:nowrap;line-height:1;transform:scaleY(1.08);transform-origin:0 84.65%;-webkit-text-stroke:0.12px #444">19</div>
<div style="position:absolute;left:-96.8px;width:300px;text-align:center;top:422.35px;font-size:8.6px;color:#444;font-weight:normal;white-space:nowrap;line-height:1;transform:scaleY(1.08);transform-origin:0 84.65%;-webkit-text-stroke:0.12px #444">20</div>
<div style="position:absolute;left:-96.8px;width:300px;text-align:center;top:435.04px;font-size:8.6px;color:#444;font-weight:normal;white-space:nowrap;line-height:1;transform:scaleY(1.08);transform-origin:0 84.65%;-webkit-text-stroke:0.12px #444">21</div>
<div style="position:absolute;left:-96.8px;width:300px;text-align:center;top:447.73px;font-size:8.6px;color:#444;font-weight:normal;white-space:nowrap;line-height:1;transform:scaleY(1.08);transform-origin:0 84.65%;-webkit-text-stroke:0.12px #444">22</div>
<div style="position:absolute;left:-96.8px;width:300px;text-align:center;top:460.41px;font-size:8.6px;color:#444;font-weight:normal;white-space:nowrap;line-height:1;transform:scaleY(1.08);transform-origin:0 84.65%;-webkit-text-stroke:0.12px #444">23</div>
<div style="position:absolute;left:-96.8px;width:300px;text-align:center;top:473.1px;font-size:8.6px;color:#444;font-weight:normal;white-space:nowrap;line-height:1;transform:scaleY(1.08);transform-origin:0 84.65%;-webkit-text-stroke:0.12px #444">24</div>
<div style="position:absolute;left:-96.8px;width:300px;text-align:center;top:485.78px;font-size:8.6px;color:#444;font-weight:normal;white-space:nowrap;line-height:1;transform:scaleY(1.08);transform-origin:0 84.65%;-webkit-text-stroke:0.12px #444">25</div>
<div style="position:absolute;left:-96.8px;width:300px;text-align:center;top:498.47px;font-size:8.6px;color:#444;font-weight:normal;white-space:nowrap;line-height:1;transform:scaleY(1.08);transform-origin:0 84.65%;-webkit-text-stroke:0.12px #444">26</div>
<div style="position:absolute;left:-96.8px;width:300px;text-align:center;top:511.16px;font-size:8.6px;color:#444;font-weight:normal;white-space:nowrap;line-height:1;transform:scaleY(1.08);transform-origin:0 84.65%;-webkit-text-stroke:0.12px #444">27</div>
<div style="position:absolute;left:-96.8px;width:300px;text-align:center;top:523.84px;font-size:8.6px;color:#444;font-weight:normal;white-space:nowrap;line-height:1;transform:scaleY(1.08);transform-origin:0 84.65%;-webkit-text-stroke:0.12px #444">28</div>
<div style="position:absolute;left:-96.8px;width:300px;text-align:center;top:536.53px;font-size:8.6px;color:#444;font-weight:normal;white-space:nowrap;line-height:1;transform:scaleY(1.08);transform-origin:0 84.65%;-webkit-text-stroke:0.12px #444">29</div>
<div style="position:absolute;left:-96.8px;width:300px;text-align:center;top:549.21px;font-size:8.6px;color:#444;font-weight:normal;white-space:nowrap;line-height:1;transform:scaleY(1.08);transform-origin:0 84.65%;-webkit-text-stroke:0.12px #444">30</div>
<div style="position:absolute;left:-96.8px;width:300px;text-align:center;top:561.9px;font-size:8.6px;color:#444;font-weight:normal;white-space:nowrap;line-height:1;transform:scaleY(1.08);transform-origin:0 84.65%;-webkit-text-stroke:0.12px #444">31</div>
<div style="position:absolute;left:-96.8px;width:300px;text-align:center;top:574.59px;font-size:8.6px;color:#444;font-weight:normal;white-space:nowrap;line-height:1;transform:scaleY(1.08);transform-origin:0 84.65%;-webkit-text-stroke:0.12px #444">32</div>
<div style="position:absolute;left:-96.8px;width:300px;text-align:center;top:587.27px;font-size:8.6px;color:#444;font-weight:normal;white-space:nowrap;line-height:1;transform:scaleY(1.08);transform-origin:0 84.65%;-webkit-text-stroke:0.12px #444">33</div>
<div style="position:absolute;left:-96.8px;width:300px;text-align:center;top:599.96px;font-size:8.6px;color:#444;font-weight:normal;white-space:nowrap;line-height:1;transform:scaleY(1.08);transform-origin:0 84.65%;-webkit-text-stroke:0.12px #444">34</div>
<div style="position:absolute;left:-96.8px;width:300px;text-align:center;top:612.64px;font-size:8.6px;color:#444;font-weight:normal;white-space:nowrap;line-height:1;transform:scaleY(1.08);transform-origin:0 84.65%;-webkit-text-stroke:0.12px #444">35</div>
<div style="position:absolute;left:-96.8px;width:300px;text-align:center;top:625.33px;font-size:8.6px;color:#444;font-weight:normal;white-space:nowrap;line-height:1;transform:scaleY(1.08);transform-origin:0 84.65%;-webkit-text-stroke:0.12px #444">36</div>
<div style="position:absolute;left:61.3px;top:177.7px;width:53.4px;height:14.3px;box-sizing:border-box;border:1.7px solid #107236"></div>
<div style="position:absolute;left:112px;top:189.2px;width:4px;height:4px;background:#107236;outline:0.6px solid #fff"></div>
<div style="position:absolute;left:44px;top:638px;width:397px;height:21px;background:#efefef"></div>
<div style="position:absolute;left:44px;top:638px;width:397px;height:1px;background:#dadada"></div>
<svg style="left:0;top:0" width="1200" height="736">
<path d="M61.2 644.8 V651.6 L56.6 648.2 Z" fill="#bdbdbd"/><path d="M74.8 644.8 V651.6 L79.4 648.2 Z" fill="#bdbdbd"/>
<path d="M170 644.4 V652.2 M166.1 648.3 H173.9" stroke="#333" stroke-width="1.15"/>
</svg>
<div style="position:absolute;left:92.5px;top:637.6px;width:62.5px;height:18.4px;background:#ffffff;border-radius:0 0 3px 3px;box-sizing:border-box;border:0.8px solid #c9c9c9;border-top:none;box-shadow:0 0.6px 0.8px rgba(0,0,0,0.2)"></div>
<div style="position:absolute;left:-26.599999999999994px;width:300px;text-align:center;top:644.6px;font-size:9.8px;color:#167443;font-weight:bold;white-space:nowrap;line-height:1;transform:scaleY(1.12);transform-origin:0 84.65%">Foglio1</div>
<div style="position:absolute;left:184.6px;top:639.2px;width:1px;height:16px;background:#d4d4d4"></div>
<div style="position:absolute;left:44px;top:659px;width:1111px;height:18px;background:linear-gradient(#e9e9e9,#e3e3e3)"></div>
<div style="position:absolute;left:44px;top:659px;width:1111px;height:1px;background:#d0d0d0"></div>
<div style="position:absolute;left:63.7px;top:663.5px;font-size:9.8px;color:#505050;font-weight:normal;white-space:nowrap;line-height:1;-webkit-text-stroke:0.2px #505050">Pronto</div>
<div style="position:absolute;left:903.2px;top:659.8px;width:28.7px;height:17px;background:#ababab"></div>
<svg style="left:0;top:0" width="1200" height="736">
<rect x="911.7" y="663" width="11.7" height="10.6" rx="1.5" fill="#fbfbfb"/>
<g fill="#444"><circle cx="914.4" cy="665.6" r="0.75"/><circle cx="917.55" cy="665.6" r="0.75"/><circle cx="920.7" cy="665.6" r="0.75"/>
<circle cx="914.4" cy="668.3" r="0.75"/><circle cx="917.55" cy="668.3" r="0.75"/><circle cx="920.7" cy="668.3" r="0.75"/>
<circle cx="914.4" cy="671" r="0.75"/><circle cx="917.55" cy="671" r="0.75"/><circle cx="920.7" cy="671" r="0.75"/></g>
<rect x="940.6" y="663.6" width="10.6" height="9.6" rx="1.6" fill="#f4f4f4" stroke="#666" stroke-width="1.2"/><rect x="943.9" y="665" width="4" height="6.8" fill="none" stroke="#888" stroke-width="0.9"/>
<rect x="968.6" y="663.6" width="10.8" height="9.6" rx="1.6" fill="#f4f4f4" stroke="#666" stroke-width="1.2"/><path d="M971.2 663.6 V669.8 H979.4 M974.6 663.6 V668" fill="none" stroke="#666" stroke-width="1.1"/>
<path d="M995 668.5 H1000.6" stroke="#555" stroke-width="1.4"/>
<path d="M1091 668.5 H1097.4 M1094.2 665.3 V671.7" stroke="#555" stroke-width="1.4"/>
<rect x="1006.8" y="666.8" width="79" height="3.2" rx="1.6" fill="#8e8e8e"/>
<circle cx="1046" cy="668.4" r="6.6" fill="#fdfdfd" stroke="#bdbdbd" stroke-width="0.7"/>
</svg>
<div style="position:absolute;left:1111px;top:663.6px;font-size:9.8px;color:#555;font-weight:normal;white-space:nowrap;line-height:1;-webkit-text-stroke:0.2px #555;transform:scaleY(1.1);transform-origin:0 84.65%">100%</div>
<div style="position:absolute;left:441px;top:161.8px;width:714px;height:497.49999999999994px;background:#ebebeb"></div>
<div style="position:absolute;left:441px;top:161.8px;width:1.2px;height:497.49999999999994px;background:#d3d3d3"></div>
<div style="position:absolute;left:441px;top:161.8px;width:714px;height:1px;background:#f6f6f6"></div>
<div style="position:absolute;left:456.3px;top:166.37px;font-size:12.2px;color:#1e1e1e;font-weight:normal;white-space:nowrap;line-height:1;-webkit-text-stroke:0.3px #1e1e1e">Dati da immagine</div>
<svg style="left:0;top:0" width="1200" height="736">
<circle cx="1143.8" cy="172.2" r="6.6" fill="#fff" opacity="0.8"/>
<circle cx="1143.8" cy="172.2" r="5.7" fill="#606060"/>
<path d="M1141.3 169.7 L1146.3 174.7 M1146.3 169.7 L1141.3 174.7" stroke="#fff" stroke-width="1.3"/>
<path d="M977.5 237.2 L979 238.5 M983 237.2 L984.5 238.5" stroke="#999" stroke-width="0.8"/>
</svg>
<div style="position:absolute;left:443.3px;top:237.5px;width:710px;height:103.5px;background:#f7fafb"></div>
<div style="position:absolute;left:443.3px;top:240.2px;width:710px;height:18.4px;background:#1a4a5f"></div>
<div style="position:absolute;left:443.3px;top:258.6px;width:710px;height:20.399999999999977px;background:#ffffff"></div>
<div style="position:absolute;left:443.3px;top:279.0px;width:710px;height:20.0px;background:#d3e8f1"></div>
<div style="position:absolute;left:443.3px;top:299.0px;width:710px;height:20.0px;background:#ffffff"></div>
<div style="position:absolute;left:443.3px;top:319.0px;width:710px;height:19.600000000000023px;background:#d3e8f1"></div>
<div style="position:absolute;left:443.3px;top:338.6px;width:710px;height:1.3px;background:#9db8c4"></div>
<div style="position:absolute;left:443.3px;top:240.2px;width:1px;height:99.6px;background:#9db8c4"></div>
<div style="position:absolute;left:1152.5px;top:240.2px;width:1px;height:99.6px;background:#9db8c4"></div>
<div style="position:absolute;left:537.5px;top:240.2px;width:1.3px;height:18.4px;background:#5e7f8d"></div>
<div style="position:absolute;left:537.6px;top:258.6px;width:1px;height:80px;background:#a9bcc5"></div>
<div style="position:absolute;left:701.4px;top:240.2px;width:1.3px;height:18.4px;background:#5e7f8d"></div>
<div style="position:absolute;left:701.5px;top:258.6px;width:1px;height:80px;background:#a9bcc5"></div>
<div style="position:absolute;left:905.4px;top:240.2px;width:1.3px;height:18.4px;background:#5e7f8d"></div>
<div style="position:absolute;left:905.5px;top:258.6px;width:1px;height:80px;background:#a9bcc5"></div>
<div style="position:absolute;left:1025.4px;top:240.2px;width:1.3px;height:18.4px;background:#5e7f8d"></div>
<div style="position:absolute;left:1025.5px;top:258.6px;width:1px;height:80px;background:#a9bcc5"></div>
<div style="position:absolute;left:450.8px;top:246.29px;font-size:8.05px;color:#ffffff;font-weight:bold;white-space:nowrap;line-height:1;transform:scaleY(1.1);transform-origin:0 80%">Numero prodotto</div>
<div style="position:absolute;left:545.6px;top:246.29px;font-size:8.05px;color:#ffffff;font-weight:bold;white-space:nowrap;line-height:1;transform:scaleY(1.1);transform-origin:0 80%">Nome</div>
<div style="position:absolute;left:709.5px;top:246.29px;font-size:8.05px;color:#ffffff;font-weight:bold;white-space:nowrap;line-height:1;transform:scaleY(1.1);transform-origin:0 80%">Descrizione</div>
<div style="position:absolute;left:913.5px;top:246.29px;font-size:8.05px;color:#ffffff;font-weight:bold;white-space:nowrap;line-height:1;transform:scaleY(1.1);transform-origin:0 80%">Prezzo al dettaglio/unità</div>
<div style="position:absolute;left:1033.5px;top:246.29px;font-size:8.05px;color:#ffffff;font-weight:bold;white-space:nowrap;line-height:1;transform:scaleY(1.1);transform-origin:0 80%">Prezzo alla rinfusa/unità</div>
<div style="position:absolute;left:451.0px;top:265.77px;font-size:7.95px;color:#1a1a1a;font-weight:normal;white-space:nowrap;line-height:1;transform:scaleY(1.12);transform-origin:0 80%">1001</div>
<div style="position:absolute;left:545.8px;top:265.77px;font-size:7.95px;color:#1a1a1a;font-weight:normal;white-space:nowrap;line-height:1;transform:scaleY(1.12);transform-origin:0 80%">Materiale espanso di riempimento</div>
<div style="position:absolute;left:709.7px;top:265.77px;font-size:7.95px;color:#1a1a1a;font-weight:normal;white-space:nowrap;line-height:1;transform:scaleY(1.12);transform-origin:0 80%">Materiale espanso per scatole di qualsiasi dimensione</div>
<div style="position:absolute;left:913.7px;top:265.77px;font-size:7.95px;color:#1a1a1a;font-weight:normal;white-space:nowrap;line-height:1;transform:scaleY(1.12);transform-origin:0 80%">€ 8,50</div>
<div style="position:absolute;left:1033.7px;top:265.77px;font-size:7.95px;color:#1a1a1a;font-weight:normal;white-space:nowrap;line-height:1;transform:scaleY(1.12);transform-origin:0 80%">€ 3,50</div>
<div style="position:absolute;left:451.0px;top:286.17px;font-size:7.95px;color:#1a1a1a;font-weight:normal;white-space:nowrap;line-height:1;transform:scaleY(1.12);transform-origin:0 80%">1002</div>
<div style="position:absolute;left:545.8px;top:286.17px;font-size:7.95px;color:#1a1a1a;font-weight:normal;white-space:nowrap;line-height:1;transform:scaleY(1.12);transform-origin:0 80%">Nastro adesivo</div>
<div style="position:absolute;left:709.7px;top:286.17px;font-size:7.95px;color:#1a1a1a;font-weight:normal;white-space:nowrap;line-height:1;transform:scaleY(1.12);transform-origin:0 80%">Nastro per imballaggi, 2"</div>
<div style="position:absolute;left:913.7px;top:286.17px;font-size:7.95px;color:#1a1a1a;font-weight:normal;white-space:nowrap;line-height:1;transform:scaleY(1.12);transform-origin:0 80%">€ 3,99</div>
<div style="position:absolute;left:1033.7px;top:286.17px;font-size:7.95px;color:#1a1a1a;font-weight:normal;white-space:nowrap;line-height:1;transform:scaleY(1.12);transform-origin:0 80%">€ 1,75</div>
<div style="position:absolute;left:451.0px;top:306.17px;font-size:7.95px;color:#1a1a1a;font-weight:normal;white-space:nowrap;line-height:1;transform:scaleY(1.12);transform-origin:0 80%">1001</div>
<div style="position:absolute;left:545.8px;top:306.17px;font-size:7.95px;color:#1a1a1a;font-weight:normal;white-space:nowrap;line-height:1;transform:scaleY(1.12);transform-origin:0 80%">Materiale espanso di riempimento</div>
<div style="position:absolute;left:709.7px;top:306.17px;font-size:7.95px;color:#1a1a1a;font-weight:normal;white-space:nowrap;line-height:1;transform:scaleY(1.12);transform-origin:0 80%">Materiale espanso per scatole di qualsiasi dimensione</div>
<div style="position:absolute;left:913.7px;top:306.17px;font-size:7.95px;color:#1a1a1a;font-weight:normal;white-space:nowrap;line-height:1;transform:scaleY(1.12);transform-origin:0 80%">€ 8,50</div>
<div style="position:absolute;left:1033.7px;top:306.17px;font-size:7.95px;color:#1a1a1a;font-weight:normal;white-space:nowrap;line-height:1;transform:scaleY(1.12);transform-origin:0 80%">€ 3,50</div>
<div style="position:absolute;left:451.0px;top:326.17px;font-size:7.95px;color:#1a1a1a;font-weight:normal;white-space:nowrap;line-height:1;transform:scaleY(1.12);transform-origin:0 80%">1002</div>
<div style="position:absolute;left:545.8px;top:326.17px;font-size:7.95px;color:#1a1a1a;font-weight:normal;white-space:nowrap;line-height:1;transform:scaleY(1.12);transform-origin:0 80%">Nastro adesivo</div>
<div style="position:absolute;left:709.7px;top:326.17px;font-size:7.95px;color:#1a1a1a;font-weight:normal;white-space:nowrap;line-height:1;transform:scaleY(1.12);transform-origin:0 80%">Nastro per imballaggi, 2"</div>
<div style="position:absolute;left:913.7px;top:326.17px;font-size:7.95px;color:#1a1a1a;font-weight:normal;white-space:nowrap;line-height:1;transform:scaleY(1.12);transform-origin:0 80%">€ 3,99</div>
<div style="position:absolute;left:1033.7px;top:326.17px;font-size:7.95px;color:#1a1a1a;font-weight:normal;white-space:nowrap;line-height:1;transform:scaleY(1.12);transform-origin:0 80%">€ 1,75</div>
<div style="position:absolute;left:653.8px;top:400.6px;width:96.20000000000005px;height:25.2px;background:#0a78d4;border-radius:2px"></div>
<div style="position:absolute;left:551.9px;width:300px;text-align:center;top:408.87px;font-size:10.2px;color:#ffffff;font-weight:bold;white-space:nowrap;line-height:1;">Inserisci dati</div>
<div style="position:absolute;left:757px;top:400.6px;width:81px;height:25.2px;background:#0a78d4;border-radius:2px"></div>
<div style="position:absolute;left:647.5px;width:300px;text-align:center;top:408.87px;font-size:10.2px;color:#ffffff;font-weight:bold;white-space:nowrap;line-height:1;">Revisione</div>
<div style="position:absolute;left:845.5px;top:400.6px;width:71.5px;height:25.2px;background:#0a78d4;border-radius:2px"></div>
<div style="position:absolute;left:731.25px;width:300px;text-align:center;top:408.87px;font-size:10.2px;color:#ffffff;font-weight:bold;white-space:nowrap;line-height:1;">Annulla</div>
<svg style="left:0;top:0" width="1200" height="736"><g fill="none" stroke="#555" stroke-width="1.1">
<path d="M930.6 418 V415.6 Q928 414 928 411.2 A4.5 4.5 0 0 1 937 411.2 Q937 414 934.4 415.6 V418 Z"/><path d="M931.2 420 H933.8"/></g></svg>
<div style="position:absolute;left:443px;top:430.7px;width:88.20000000000005px;height:40.30000000000001px;background:#ffcccc;box-sizing:border-box;border-right:1.3px solid #cdcdcd;border-bottom:1.3px solid #cdcdcd"></div>
<div style="position:absolute;left:532.7px;top:430.7px;width:156.5px;height:40.30000000000001px;background:#ffcccc;box-sizing:border-box;border-right:1.3px solid #cdcdcd;border-bottom:1.3px solid #cdcdcd"></div>
<div style="position:absolute;left:690.7px;top:430.7px;width:238.5px;height:40.30000000000001px;background:#ffcccc;box-sizing:border-box;border-right:1.3px solid #cdcdcd;border-bottom:1.3px solid #cdcdcd"></div>
<div style="position:absolute;left:930.4px;top:430.7px;width:111.60000000000002px;height:40.30000000000001px;background:#ffcccc;box-sizing:border-box;border-right:1.3px solid #cdcdcd;border-bottom:1.3px solid #cdcdcd"></div>
<div style="position:absolute;left:1042.8px;top:430.7px;width:117.20000000000005px;height:40.30000000000001px;background:#ffcccc;box-sizing:border-box;border-right:1.3px solid #cdcdcd;border-bottom:1.3px solid #cdcdcd"></div>
<div style="position:absolute;left:443px;top:472.2px;width:88.20000000000005px;height:40.80000000000001px;background:#ebebeb;box-sizing:border-box;border-right:1.3px solid #cdcdcd;border-bottom:1.3px solid #cdcdcd"></div>
<div style="position:absolute;left:532.7px;top:472.2px;width:156.5px;height:40.80000000000001px;background:#ebebeb;box-sizing:border-box;border-right:1.3px solid #cdcdcd;border-bottom:1.3px solid #cdcdcd"></div>
<div style="position:absolute;left:690.7px;top:472.2px;width:238.5px;height:40.80000000000001px;background:#ebebeb;box-sizing:border-box;border-right:1.3px solid #cdcdcd;border-bottom:1.3px solid #cdcdcd"></div>
<div style="position:absolute;left:930.4px;top:472.2px;width:111.60000000000002px;height:40.80000000000001px;background:#ebebeb;box-sizing:border-box;border-right:1.3px solid #cdcdcd;border-bottom:1.3px solid #cdcdcd"></div>
<div style="position:absolute;left:1042.8px;top:472.2px;width:117.20000000000005px;height:40.80000000000001px;background:#ebebeb;box-sizing:border-box;border-right:1.3px solid #cdcdcd;border-bottom:1.3px solid #cdcdcd"></div>
<div style="position:absolute;left:443px;top:514.2px;width:88.20000000000005px;height:40.799999999999955px;background:#ebebeb;box-sizing:border-box;border-right:1.3px solid #cdcdcd;border-bottom:1.3px solid #cdcdcd"></div>
<div style="position:absolute;left:532.7px;top:514.2px;width:156.5px;height:40.799999999999955px;background:#ebebeb;box-sizing:border-box;border-right:1.3px solid #cdcdcd;border-bottom:1.3px solid #cdcdcd"></div>
<div style="position:absolute;left:690.7px;top:514.2px;width:238.5px;height:40.799999999999955px;background:#ebebeb;box-sizing:border-box;border-right:1.3px solid #cdcdcd;border-bottom:1.3px solid #cdcdcd"></div>
<div style="position:absolute;left:930.4px;top:514.2px;width:111.60000000000002px;height:40.799999999999955px;background:#ebebeb;box-sizing:border-box;border-right:1.3px solid #cdcdcd;border-bottom:1.3px solid #cdcdcd"></div>
<div style="position:absolute;left:1042.8px;top:514.2px;width:117.20000000000005px;height:40.799999999999955px;background:#ebebeb;box-sizing:border-box;border-right:1.3px solid #cdcdcd;border-bottom:1.3px solid #cdcdcd"></div>
<div style="position:absolute;left:443px;top:556.1px;width:88.20000000000005px;height:40.89999999999998px;background:#ebebeb;box-sizing:border-box;border-right:1.3px solid #cdcdcd;border-bottom:1.3px solid #cdcdcd"></div>
<div style="position:absolute;left:532.7px;top:556.1px;width:156.5px;height:40.89999999999998px;background:#ebebeb;box-sizing:border-box;border-right:1.3px solid #cdcdcd;border-bottom:1.3px solid #cdcdcd"></div>
<div style="position:absolute;left:690.7px;top:556.1px;width:238.5px;height:40.89999999999998px;background:#ebebeb;box-sizing:border-box;border-right:1.3px solid #cdcdcd;border-bottom:1.3px solid #cdcdcd"></div>
<div style="position:absolute;left:930.4px;top:556.1px;width:111.60000000000002px;height:40.89999999999998px;background:#ebebeb;box-sizing:border-box;border-right:1.3px solid #cdcdcd;border-bottom:1.3px solid #cdcdcd"></div>
<div style="position:absolute;left:1042.8px;top:556.1px;width:117.20000000000005px;height:40.89999999999998px;background:#ebebeb;box-sizing:border-box;border-right:1.3px solid #cdcdcd;border-bottom:1.3px solid #cdcdcd"></div>
<div style="position:absolute;left:443px;top:598px;width:88.20000000000005px;height:40px;background:#ebebeb;box-sizing:border-box;border-right:1.3px solid #cdcdcd;border-bottom:1.3px solid #cdcdcd"></div>
<div style="position:absolute;left:532.7px;top:598px;width:156.5px;height:40px;background:#ebebeb;box-sizing:border-box;border-right:1.3px solid #cdcdcd;border-bottom:1.3px solid #cdcdcd"></div>
<div style="position:absolute;left:690.7px;top:598px;width:238.5px;height:40px;background:#ebebeb;box-sizing:border-box;border-right:1.3px solid #cdcdcd;border-bottom:1.3px solid #cdcdcd"></div>
<div style="position:absolute;left:930.4px;top:598px;width:111.60000000000002px;height:40px;background:#ebebeb;box-sizing:border-box;border-right:1.3px solid #cdcdcd;border-bottom:1.3px solid #cdcdcd"></div>
<div style="position:absolute;left:1042.8px;top:598px;width:117.20000000000005px;height:40px;background:#ebebeb;box-sizing:border-box;border-right:1.3px solid #cdcdcd;border-bottom:1.3px solid #cdcdcd"></div>
<div style="position:absolute;left:449.2px;top:446.83px;font-size:9.65px;color:#1a1a1a;font-weight:normal;white-space:nowrap;line-height:1;transform:scaleY(1.1);transform-origin:0 84.65%;-webkit-text-stroke:0.15px #1a1a1a">Numero prodotto</div>
<div style="position:absolute;left:538.9px;top:446.83px;font-size:9.65px;color:#1a1a1a;font-weight:normal;white-space:nowrap;line-height:1;transform:scaleY(1.1);transform-origin:0 84.65%;-webkit-text-stroke:0.15px #1a1a1a">Nome</div>
<div style="position:absolute;left:696.9px;top:446.83px;font-size:9.65px;color:#1a1a1a;font-weight:normal;white-space:nowrap;line-height:1;transform:scaleY(1.1);transform-origin:0 84.65%;-webkit-text-stroke:0.15px #1a1a1a">Descrizione</div>
<div style="position:absolute;left:936.6px;top:446.83px;font-size:9.65px;color:#1a1a1a;font-weight:normal;white-space:nowrap;line-height:1;transform:scaleY(1.1);transform-origin:0 84.65%;-webkit-text-stroke:0.15px #1a1a1a">Prezzo al dettglio/unità</div>
<div style="position:absolute;left:1049.0px;top:446.83px;font-size:9.65px;color:#1a1a1a;font-weight:normal;white-space:nowrap;line-height:1;transform:scaleY(1.1);transform-origin:0 84.65%;-webkit-text-stroke:0.15px #1a1a1a">Prezzo alla rinfusa/unità</div>
<div style="position:absolute;left:449.2px;top:489.02px;font-size:9.55px;color:#1a1a1a;font-weight:normal;white-space:nowrap;line-height:1;transform:scaleY(1.1);transform-origin:0 84.65%;-webkit-text-stroke:0.15px #1a1a1a">1001</div>
<div style="position:absolute;left:538.9px;top:489.02px;font-size:9.55px;color:#1a1a1a;font-weight:normal;white-space:nowrap;line-height:1;transform:scaleY(1.1);transform-origin:0 84.65%;-webkit-text-stroke:0.15px #1a1a1a">Materiale espanso di riempimento</div>
<div style="position:absolute;left:696.9px;top:489.18px;font-size:9.36px;color:#1a1a1a;font-weight:normal;white-space:nowrap;line-height:1;transform:scaleY(1.1);transform-origin:0 84.65%;-webkit-text-stroke:0.15px #1a1a1a">Materiale espanso per scatole di qualsiasi dimensione</div>
<div style="position:absolute;left:936.6px;top:489.02px;font-size:9.55px;color:#1a1a1a;font-weight:normal;white-space:nowrap;line-height:1;transform:scaleY(1.1);transform-origin:0 84.65%;-webkit-text-stroke:0.15px #1a1a1a">€ 8,50</div>
<div style="position:absolute;left:1049.0px;top:489.02px;font-size:9.55px;color:#1a1a1a;font-weight:normal;white-space:nowrap;line-height:1;transform:scaleY(1.1);transform-origin:0 84.65%;-webkit-text-stroke:0.15px #1a1a1a">€ 3,50</div>
<div style="position:absolute;left:449.2px;top:531.02px;font-size:9.55px;color:#1a1a1a;font-weight:normal;white-space:nowrap;line-height:1;transform:scaleY(1.1);transform-origin:0 84.65%;-webkit-text-stroke:0.15px #1a1a1a">1002</div>
<div style="position:absolute;left:538.9px;top:531.02px;font-size:9.55px;color:#1a1a1a;font-weight:normal;white-space:nowrap;line-height:1;transform:scaleY(1.1);transform-origin:0 84.65%;-webkit-text-stroke:0.15px #1a1a1a">Nastro adesivo</div>
<div style="position:absolute;left:696.9px;top:531.18px;font-size:9.36px;color:#1a1a1a;font-weight:normal;white-space:nowrap;line-height:1;transform:scaleY(1.1);transform-origin:0 84.65%;-webkit-text-stroke:0.15px #1a1a1a">Nastro per imballaggi , 2"</div>
<div style="position:absolute;left:936.6px;top:531.02px;font-size:9.55px;color:#1a1a1a;font-weight:normal;white-space:nowrap;line-height:1;transform:scaleY(1.1);transform-origin:0 84.65%;-webkit-text-stroke:0.15px #1a1a1a">€ 3,99</div>
<div style="position:absolute;left:1049.0px;top:531.02px;font-size:9.55px;color:#1a1a1a;font-weight:normal;white-space:nowrap;line-height:1;transform:scaleY(1.1);transform-origin:0 84.65%;-webkit-text-stroke:0.15px #1a1a1a">€ 1,75</div>
<div style="position:absolute;left:449.2px;top:572.92px;font-size:9.55px;color:#1a1a1a;font-weight:normal;white-space:nowrap;line-height:1;transform:scaleY(1.1);transform-origin:0 84.65%;-webkit-text-stroke:0.15px #1a1a1a">1001</div>
<div style="position:absolute;left:538.9px;top:572.92px;font-size:9.55px;color:#1a1a1a;font-weight:normal;white-space:nowrap;line-height:1;transform:scaleY(1.1);transform-origin:0 84.65%;-webkit-text-stroke:0.15px #1a1a1a">Materiale espanso di riempimento</div>
<div style="position:absolute;left:696.9px;top:573.08px;font-size:9.36px;color:#1a1a1a;font-weight:normal;white-space:nowrap;line-height:1;transform:scaleY(1.1);transform-origin:0 84.65%;-webkit-text-stroke:0.15px #1a1a1a">Materiale espanso per scatole di qualsiasi dimensione</div>
<div style="position:absolute;left:936.6px;top:572.92px;font-size:9.55px;color:#1a1a1a;font-weight:normal;white-space:nowrap;line-height:1;transform:scaleY(1.1);transform-origin:0 84.65%;-webkit-text-stroke:0.15px #1a1a1a">€ 8,50</div>
<div style="position:absolute;left:1049.0px;top:572.92px;font-size:9.55px;color:#1a1a1a;font-weight:normal;white-space:nowrap;line-height:1;transform:scaleY(1.1);transform-origin:0 84.65%;-webkit-text-stroke:0.15px #1a1a1a">€ 3,50</div>
<div style="position:absolute;left:449.2px;top:614.82px;font-size:9.55px;color:#1a1a1a;font-weight:normal;white-space:nowrap;line-height:1;transform:scaleY(1.1);transform-origin:0 84.65%;-webkit-text-stroke:0.15px #1a1a1a">1002</div>
<div style="position:absolute;left:538.9px;top:614.82px;font-size:9.55px;color:#1a1a1a;font-weight:normal;white-space:nowrap;line-height:1;transform:scaleY(1.1);transform-origin:0 84.65%;-webkit-text-stroke:0.15px #1a1a1a">Nastro adesivo</div>
<div style="position:absolute;left:696.9px;top:614.98px;font-size:9.36px;color:#1a1a1a;font-weight:normal;white-space:nowrap;line-height:1;transform:scaleY(1.1);transform-origin:0 84.65%;-webkit-text-stroke:0.15px #1a1a1a">Nastro perimballaggi , 2"</div>
<div style="position:absolute;left:936.6px;top:614.82px;font-size:9.55px;color:#1a1a1a;font-weight:normal;white-space:nowrap;line-height:1;transform:scaleY(1.1);transform-origin:0 84.65%;-webkit-text-stroke:0.15px #1a1a1a">€ 3,99</div>
<div style="position:absolute;left:1049.0px;top:614.82px;font-size:9.55px;color:#1a1a1a;font-weight:normal;white-space:nowrap;line-height:1;transform:scaleY(1.1);transform-origin:0 84.65%;-webkit-text-stroke:0.15px #1a1a1a">€ 1,75</div>
<div style="position:absolute;left:1154.2px;top:161.8px;width:1.5px;height:497.5px;background:#f8f8f8"></div>
<div style="position:absolute;left:443.3px;top:632.9px;width:699.5px;height:4.6px;background:#8a8a8a;border-radius:2.3px"></div>
<div style="position:absolute;left:1149.2px;top:430.9px;width:4.6px;height:198px;background:rgba(110,110,110,0.7);border-radius:2.3px"></div>
<div style="position:absolute;left:442.2px;top:638.2px;width:714px;height:21.1px;background:#ebebeb"></div>
<div style="position:absolute;left:442.2px;top:638.2px;width:714px;height:1px;background:#d2d2d2"></div>
<div style="position:absolute;left:447px;top:643.99px;font-size:8.05px;color:#1d6fbb;font-weight:normal;white-space:nowrap;line-height:1;text-decoration:underline">Altre informazioni</div>
<div style="position:absolute;left:1061.5px;top:643.99px;font-size:8.05px;color:#1d6fbb;font-weight:normal;white-space:nowrap;line-height:1;text-decoration:underline">Note di terze parti</div>
<div style="position:absolute;left:44px;top:55px;width:0.8px;height:622px;background:#a0a0a0"></div>
</div></body></html>
